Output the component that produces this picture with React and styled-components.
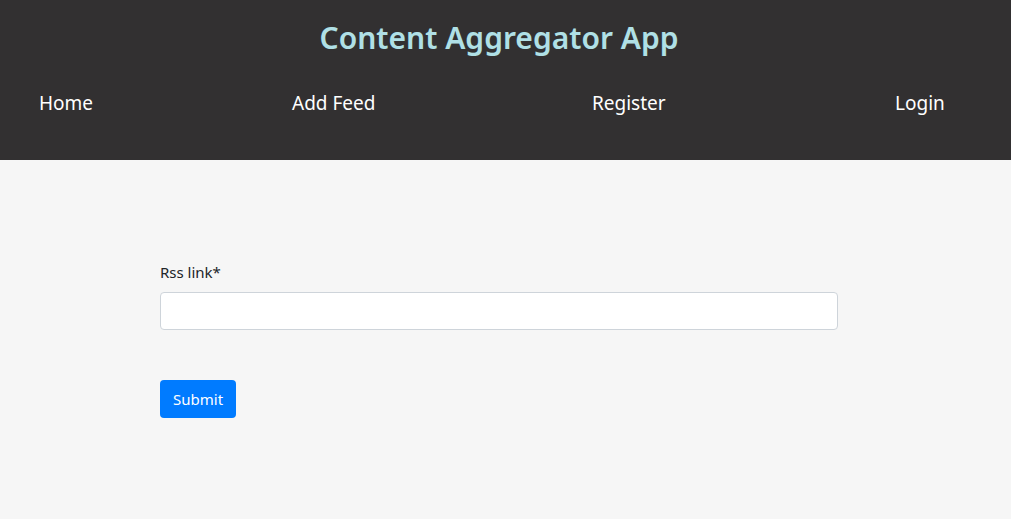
import styled, { createGlobalStyle } from 'styled-components';

const GlobalStyle = createGlobalStyle`
  * {
    box-sizing: border-box;
  }

  body {
    margin: 0;
    background-color: #f6f6f6;
    font-family: "Noto Sans", "Open Sans", sans-serif;
    color: #212529;
  }
`;

const Header = styled.header`
  background-color: #323031;
  height: 160px;
  display: flex;
  flex-direction: column;
`;

const Titulo = styled.h1`
  margin: 0;
  padding: 16px 13px 0 0;
  text-align: center;
  font-size: 30px;
  font-weight: 600;
  line-height: 44px;
  color: #b0e0e6;
`;

const Nav = styled.nav`
  display: grid;
  grid-template-columns: 253px 300px 303px auto;
  padding-left: 39px;
  margin-top: 29px;
`;

const NavLink = styled.a`
  color: #ffffff;
  font-size: 19px;
  line-height: 28px;
  text-decoration: none;
  cursor: pointer;
`;

const Main = styled.main`
  padding: 100px 0 0 160px;
`;

const Form = styled.form`
  width: 678px;
  display: flex;
  flex-direction: column;
`;

const Label = styled.label`
  font-size: 15px;
  line-height: 24px;
  margin-bottom: 8px;
`;

const Campo = styled.input`
  height: 38px;
  width: 100%;
  padding: 6px 12px;
  font-size: 16px;
  background-color: #ffffff;
  border: 1px solid #ced4da;
  border-radius: 4px;
  outline: none;
`;

const BotaoEnviar = styled.button`
  align-self: flex-start;
  margin-top: 50px;
  height: 38px;
  padding: 0 13px;
  background-color: #007bff;
  color: #ffffff;
  border: none;
  border-radius: 4px;
  font-family: inherit;
  font-size: 15px;
  cursor: pointer;
`;

export default function App() {
  const links = ['Home', 'Add Feed', 'Register', 'Login'];

  return (
    <>
      <GlobalStyle />
      <Header>
        <Titulo>Content Aggregator App</Titulo>
        <Nav>
          {links.map((link) => (
            <NavLink key={link}>{link}</NavLink>
          ))}
        </Nav>
      </Header>
      <Main>
        <Form onSubmit={(e) => e.preventDefault()}>
          <Label htmlFor="rss">Rss link*</Label>
          <Campo id="rss" type="text" />
          <BotaoEnviar type="submit">Submit</BotaoEnviar>
        </Form>
      </Main>
    </>
  );
}
